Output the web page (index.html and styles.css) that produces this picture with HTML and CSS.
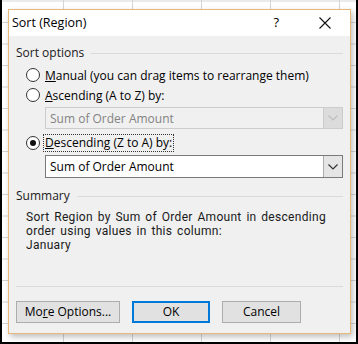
FILE: index.html
```html
<!DOCTYPE html>
<html lang="en">
<head>
  <meta charset="UTF-8" />
  <title>Sort (Region)</title>
  <link rel="stylesheet" href="styles.css">
</head>
<body>
  <div class="sheet">
    <div class="dialog">
      <div class="titlebar">
        <span class="title">Sort (Region)</span>
        <span class="help">?</span>
        <svg class="close" width="12" height="12" viewBox="0 0 12 12">
          <path d="M0.5 0.5 L11.5 11.5 M11.5 0.5 L0.5 11.5" stroke="#111" stroke-width="1.1" fill="none" />
        </svg>
      </div>

      <div class="content">
        <div class="group-label">Sort options</div>

        <label class="radio-row first">
          <span class="radio"></span>
          <span><u>M</u>anual (you can drag items to rearrange them)</span>
        </label>
        <label class="radio-row">
          <span class="radio"></span>
          <span><u>A</u>scending (A to Z) by:</span>
        </label>
        <div class="combo disabled">
          <span class="combo-text">Sum of Order Amount</span>
          <span class="combo-btn">
            <svg width="10" height="6" viewBox="0 0 10 6"><path d="M0.5 0.5 L5 5 L9.5 0.5" stroke="#bdbdbd" stroke-width="1.2" fill="none" /></svg>
          </span>
        </div>
        <label class="radio-row">
          <span class="radio checked"></span>
          <span class="focus"><u>D</u>escending (Z to A) by:</span>
        </label>
        <div class="combo active">
          <span class="combo-text">Sum of Order Amount</span>
          <span class="combo-btn">
            <svg width="10" height="6" viewBox="0 0 10 6"><path d="M0.5 0.5 L5 5 L9.5 0.5" stroke="#333" stroke-width="1.2" fill="none" /></svg>
          </span>
        </div>

        <div class="group-label summary-label">Summary</div>
        <div class="summary">
          <div>Sort Region by Sum of Order Amount in descending</div>
          <div>order using values in this column:</div>
          <div>January</div>
        </div>

        <div class="separator"></div>

        <div class="buttons">
          <button class="btn more">Mo<u>r</u>e Options...</button>
          <button class="btn ok">OK</button>
          <button class="btn cancel">Cancel</button>
        </div>
      </div>
    </div>
  </div>
</body>
</html>
```

FILE: styles.css
```css
html, body {
  margin: 0;
  padding: 0;
}

body {
  font-family: "Open Sans", "Noto Sans", sans-serif;
  font-size: 12px;
  color: #000;
}

.sheet {
  width: 358px;
  height: 344px;
  box-sizing: border-box;
  border: 2px solid #000;
  border-top: none;
  padding: 9px 0 0 6px;
  background-color: #fff;
  background-image:
    linear-gradient(to right, #d4d4d4 1px, transparent 1px),
    linear-gradient(to bottom, #d4d4d4 1px, transparent 1px);
  background-size: 69px 100%, 100% 21.5px;
  background-position: 61px 0, 0 22px;
}

.dialog {
  width: 343px;
  height: 325px;
  box-sizing: border-box;
  border: 1px solid #e8b77a;
  background: #f0f0f0;
  box-shadow: 2px 3px 6px rgba(0, 0, 0, 0.25);
  display: flex;
  flex-direction: column;
}

.titlebar {
  height: 26px;
  background: #fff;
  display: flex;
  align-items: center;
  padding-left: 3px;
  flex-shrink: 0;
}

.title {
  flex: 1;
  font-size: 12.5px;
  margin-top: -2px;
}

.help {
  font-size: 13px;
  margin-right: 40px;
  margin-top: -2px;
}

.close {
  margin-right: 19px;
}

.content {
  padding: 8px 7px 0 7px;
  flex: 1;
}

.group-label {
  display: flex;
  align-items: center;
  height: 17px;
  color: #1a1a1a;
}

.group-label::after {
  content: "";
  flex: 1;
  height: 1px;
  background: #dadada;
  margin-left: 7px;
  margin-top: 1px;
}

.radio-row {
  display: flex;
  align-items: center;
  height: 20px;
  padding-left: 10px;
}

.radio-row.first {
  margin-top: 4px;
}

.radio {
  width: 12px;
  height: 12px;
  border: 1px solid #333;
  border-radius: 50%;
  background: #fff;
  margin-right: 5px;
  position: relative;
  flex-shrink: 0;
}

.radio.checked::after {
  content: "";
  position: absolute;
  left: 3px;
  top: 3px;
  width: 6px;
  height: 6px;
  border-radius: 50%;
  background: #111;
}

.focus {
  outline: 1px dotted #333;
  outline-offset: 1px;
  line-height: 14px;
}

.combo {
  margin: 2px 0 4px 29px;
  height: 22px;
  box-sizing: border-box;
  border: 1px solid #7a7a7a;
  background: #fff;
  display: flex;
  align-items: center;
}

.combo.active {
  height: 23px;
}

.combo-text {
  flex: 1;
  padding-left: 4px;
}

.combo-btn {
  width: 18px;
  height: 100%;
  background: #e5e5e5;
  border-left: 1px solid #adadad;
  display: flex;
  align-items: center;
  justify-content: center;
}

.combo.disabled {
  border-color: #cccccc;
  background: #f0f0f0;
  color: #838383;
}

.combo.disabled .combo-btn {
  background: #dcdcdc;
  border-left-color: #cccccc;
}

.summary-label {
  margin-top: 9px;
}

.summary {
  margin: 6px 0 0 10px;
  font-family: Roboto, "Open Sans", sans-serif;
  font-size: 12px;
  line-height: 14.2px;
  letter-spacing: 0.3px;
  word-spacing: 1.5px;
  color: #1a1a1a;
}

.separator {
  height: 1px;
  background: #dadada;
  margin-top: 33px;
}

.buttons {
  display: flex;
  gap: 12px;
  margin-top: 14px;
}

.btn {
  font-family: inherit;
  font-size: 12px;
  height: 22px;
  box-sizing: border-box;
  background: #e1e1e1;
  border: 1px solid #adadad;
  color: #000;
  padding: 0;
}

.more {
  width: 104px;
}

.ok {
  width: 78px;
  border: 2px solid #0078d7;
}

.cancel {
  width: 79px;
}
```
